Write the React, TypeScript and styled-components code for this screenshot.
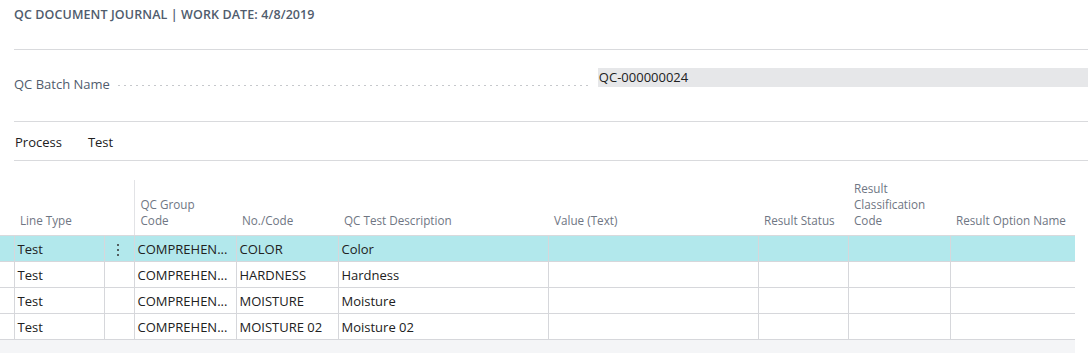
import React from 'react'
import styled, { createGlobalStyle } from 'styled-components'

type Line = {
  lineType: string
  groupCode: string
  code: string
  description: string
  selected?: boolean
}

const lines: Line[] = [
  { lineType: 'Test', groupCode: 'COMPREHEN...', code: 'COLOR', description: 'Color', selected: true },
  { lineType: 'Test', groupCode: 'COMPREHEN...', code: 'HARDNESS', description: 'Hardness' },
  { lineType: 'Test', groupCode: 'COMPREHEN...', code: 'MOISTURE', description: 'Moisture' },
  { lineType: 'Test', groupCode: 'COMPREHEN...', code: 'MOISTURE 02', description: 'Moisture 02' },
]

const colWidths = [14, 90, 30, 102, 102, 210, 210, 90, 102, 125]

const GlobalStyle = createGlobalStyle`
  html, body {
    margin: 0;
    padding: 0;
    background: #ffffff;
  }
  body {
    font-family: "Open Sans", "Noto Sans", "Liberation Sans", sans-serif;
    color: #212121;
  }
`

const Page = styled.div`
  width: 1088px;
  height: 353px;
  overflow: hidden;
  display: flex;
  flex-direction: column;
`

const Section = styled.div<{ $height: number }>`
  margin-left: 14px;
  height: ${(p) => p.$height}px;
  box-sizing: border-box;
  border-bottom: 1px solid #d9dadd;
  display: flex;
  align-items: center;
`

const Title = styled.div`
  margin-left: 14px;
  height: 50px;
  box-sizing: border-box;
  border-bottom: 1px solid #d9dadd;
  padding-top: 6px;
  font-size: 12.5px;
  font-weight: 600;
  letter-spacing: 0.1px;
  color: #505c6d;
  text-transform: uppercase;
`

const FieldRow = styled.div`
  display: flex;
  align-items: center;
  width: 100%;
  margin-top: -4px;
`

const FieldLabel = styled.span`
  font-size: 13px;
  color: #505c6d;
  white-space: nowrap;
`

const Leader = styled.span`
  flex: 0 0 auto;
  width: 472px;
  height: 8px;
  margin: 0 10px 0 6px;
  align-self: flex-end;
  margin-bottom: 6px;
  background-image: radial-gradient(circle, #c6c8cc 0.7px, transparent 0.9px);
  background-size: 6px 3px;
  background-repeat: repeat-x;
  background-position: left bottom;
`

const FieldValue = styled.div`
  flex: 1;
  height: 19px;
  margin-top: -13px;
  background: #e6e7e9;
  font-size: 13px;
  line-height: 19px;
  padding-left: 1px;
  color: #212121;
`

const ProcessBar = styled.div`
  display: flex;
  gap: 26px;
  padding-left: 1px;
  padding-top: 2px;
  font-size: 13px;
  color: #212121;
`

const Grid = styled.table`
  margin-top: 19px;
  border-collapse: collapse;
  table-layout: fixed;
  width: 1075px;
  font-size: 13px;
`

const HeadCell = styled.th<{ $divider?: boolean }>`
  height: 48px;
  padding: 0 2px 7px 6px;
  vertical-align: bottom;
  text-align: left;
  font-weight: 400;
  font-size: 11.7px;
  line-height: 16px;
  color: #6f7683;
  white-space: nowrap;
  border-bottom: 1px solid #d9dadd;
  border-right: ${(p) => (p.$divider ? '1px solid #e2e3e6' : 'none')};
`

const Row = styled.tr<{ $selected?: boolean }>`
  background: ${(p) => (p.$selected ? '#b2e8ec' : '#ffffff')};
`

const Cell = styled.td`
  height: 25px;
  padding: 0 3px;
  border: 1px solid #d6d7db;
  white-space: nowrap;
  color: #212121;
  &:first-child {
    border-left: none;
  }
  &:last-child {
    border-right: none;
  }
`

const MenuCell = styled(Cell)`
  text-align: center;
  padding: 0;
`

const Dots = styled.span`
  display: inline-flex;
  flex-direction: column;
  gap: 3px;
  vertical-align: middle;
  margin-left: -2px;
  & > i {
    width: 2px;
    height: 2px;
    background: #333;
    border-radius: 50%;
  }
`

const Footer = styled.div`
  width: 1075px;
  flex: 1;
  background: #f4f5f7;
`

const headers: { label: React.ReactNode; divider?: boolean }[] = [
  { label: '' },
  { label: 'Line Type' },
  { label: '', divider: true },
  { label: <>QC Group<br />Code</> },
  { label: 'No./Code' },
  { label: 'QC Test Description' },
  { label: 'Value (Text)' },
  { label: 'Result Status' },
  { label: <>Result<br />Classification<br />Code</> },
  { label: 'Result Option Name' },
]

export default function App() {
  return (
    <Page>
      <GlobalStyle />
      <Title>QC Document Journal | Work Date: 4/8/2019</Title>
      <Section $height={72}>
        <FieldRow>
          <FieldLabel>QC Batch Name</FieldLabel>
          <Leader />
          <FieldValue>QC-000000024</FieldValue>
        </FieldRow>
      </Section>
      <Section $height={39}>
        <ProcessBar>
          <span>Process</span>
          <span>Test</span>
        </ProcessBar>
      </Section>
      <Grid>
        <colgroup>
          {colWidths.map((w, i) => (
            <col key={i} style={{ width: w }} />
          ))}
        </colgroup>
        <thead>
          <tr>
            {headers.map((h, i) => (
              <HeadCell key={i} $divider={h.divider}>
                {h.label}
              </HeadCell>
            ))}
          </tr>
        </thead>
        <tbody>
          {lines.map((l, i) => (
            <Row key={i} $selected={l.selected}>
              <Cell />
              <Cell>{l.lineType}</Cell>
              <MenuCell>
                {l.selected && (
                  <Dots>
                    <i />
                    <i />
                    <i />
                  </Dots>
                )}
              </MenuCell>
              <Cell>{l.groupCode}</Cell>
              <Cell>{l.code}</Cell>
              <Cell>{l.description}</Cell>
              <Cell />
              <Cell />
              <Cell />
              <Cell />
            </Row>
          ))}
        </tbody>
      </Grid>
      <Footer />
    </Page>
  )
}
